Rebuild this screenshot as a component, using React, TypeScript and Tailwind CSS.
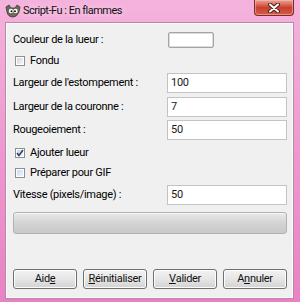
import React from "react";

const font = { fontFamily: '"Segoe UI", Roboto, "Liberation Sans", sans-serif' };

function Wilber() {
  return (
    <svg width="16" height="14" viewBox="0 0 16 14" className="shrink-0">
      <path d="M1 3 L4 1 L6 4 L10 4 L12 1 L15 3 L14 8 Q12 13 8 13 Q3 13 2 8 Z" fill="#6b6758" stroke="#3d3a32" strokeWidth="0.8" />
      <circle cx="6" cy="7" r="2.2" fill="#fff" />
      <circle cx="10.5" cy="7" r="2.2" fill="#fff" />
      <circle cx="6.5" cy="7.3" r="1" fill="#111" />
      <circle cx="10" cy="7.3" r="1" fill="#111" />
      <path d="M7 10.5 L9.5 10.5 L8.3 12 Z" fill="#9b7a3a" />
    </svg>
  );
}

function CloseButton() {
  return (
    <div className="w-[40px] h-[16px] rounded-b-[4px] border border-t-0 border-[#7a2a2a] bg-gradient-to-b from-[#e9a395] via-[#c9402e] to-[#d65a44] flex items-center justify-center shadow-[inset_0_0_0_1px_rgba(255,200,190,0.5)]">
      <svg width="12" height="10" viewBox="0 0 12 10">
        <path d="M2 1.5 L10 8.5 M10 1.5 L2 8.5" stroke="#4a1f1f" strokeWidth="4" strokeLinecap="round" />
        <path d="M2 1.5 L10 8.5 M10 1.5 L2 8.5" stroke="#ffffff" strokeWidth="2" strokeLinecap="round" />
      </svg>
    </div>
  );
}

function Checkbox({ checked, hover }: { checked?: boolean; hover?: boolean }) {
  return (
    <div className="w-[10px] h-[10px] border border-[#8e8f8f] bg-white p-[1px] shrink-0">
      <div
        className={
          hover
            ? "w-full h-full bg-gradient-to-br from-[#c6dcf2] to-[#eef5fc] flex items-center justify-center"
            : "w-full h-full bg-gradient-to-br from-[#d2d5da] to-[#f6f6f6] flex items-center justify-center"
        }>
        {checked && (
          <svg width="8" height="8" viewBox="0 0 8 8" className="-m-[1px]">
            <path d="M1 4 L3 6.5 L7 1" stroke="#2c3f78" strokeWidth="1.6" fill="none" />
          </svg>
        )}
      </div>
    </div>
  );
}

function Field({ label, value, top }: { label: string; value: string; top: string }) {
  return (
    <div className={`flex items-center h-[20px] ${top}`}>
      <span className="flex-1">{label}</span>
      <div className="w-[120px] h-full border border-[#c3c3c3] bg-white flex items-center pl-[3px] text-[#1a1a1a]">
        {value}
      </div>
    </div>
  );
}

function Button({ children }: { children: React.ReactNode }) {
  return (
    <div className="w-[64px] h-[20px] rounded-[3px] border border-[#707070] bg-gradient-to-b from-[#f2f2f2] via-[#e6e6e6] to-[#d2d2d2] shadow-[inset_0_0_0_1px_#fcfcfc] flex items-center justify-center text-[#111]">
      {children}
    </div>
  );
}

export default function App() {
  return (
    <div
      style={font}
      className="w-[300px] h-[302px] flex flex-col bg-gradient-to-b from-[#f4b3dc] via-[#ee98cf] to-[#e982c4] text-[11px] tracking-[-0.3px] text-black">
      <div className="h-[22px] flex items-start pl-[5px]">
        <div className="flex items-center h-[22px]">
          <Wilber />
          <span className="ml-[2px] text-[11px] tracking-[-0.5px] text-[#111] [text-shadow:0_0_6px_#fde4f2]">
            Script-Fu : En flammes
          </span>
        </div>
        <div className="ml-auto mr-[6px]">
          <CloseButton />
        </div>
      </div>
      <div className="ml-[5px] mr-[6px] mb-[3px] flex-1 border border-[#b98aa8] bg-[#f0f0f0] flex flex-col pl-[7px] pr-[6px] pt-[9px] shadow-[inset_0_0_0_1px_#fafafa]">
        <div className="flex items-center h-[16px]">
          <span className="flex-1">Couleur de la lueur :</span>
          <div className="w-[46px] h-full border border-[#a5a5a5] rounded-[2px] bg-white mr-[73px] shadow-[inset_0_0_0_1px_#dcdcdc]" />
        </div>
        <div className="flex items-center gap-[5px] h-[18px] mt-[4px] pl-[2px]">
          <Checkbox />
          <span>Fondu</span>
        </div>
        <Field label="Largeur de l'estompement :" value="100" top="mt-[3px]" />
        <Field label="Largeur de la couronne :" value="7" top="mt-[4px]" />
        <Field label="Rougeoiement :" value="50" top="mt-[3px]" />
        <div className="flex items-center gap-[5px] h-[18px] mt-[4px] pl-[2px]">
          <Checkbox checked />
          <span>Ajouter lueur</span>
        </div>
        <div className="flex items-center gap-[5px] h-[18px] mt-[2px] pl-[2px]">
          <Checkbox hover />
          <span>Préparer pour GIF</span>
        </div>
        <Field label="Vitesse (pixels/image) :" value="50" top="mt-[3px]" />
        <div className="mt-[7px] h-[22px] rounded-[3px] border border-[#b2b2b2] bg-gradient-to-b from-[#e9e9e9] via-[#d4d4d4] to-[#c9c9c9] shadow-[inset_0_1px_0_#f8f8f8]" />
        <div className="mt-[35px] flex gap-[6px]">
          <Button>
            Aid<span className="underline">e</span>
          </Button>
          <Button>
            <span className="underline">R</span>éinitialiser
          </Button>
          <Button>
            <span className="underline">V</span>alider
          </Button>
          <Button>
            A<span className="underline">n</span>nuler
          </Button>
        </div>
      </div>
    </div>
  );
}
